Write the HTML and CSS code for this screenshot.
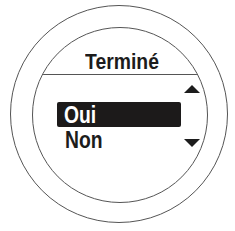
FILE: index.html
```html
<!DOCTYPE html>
<html lang="fr">
  <head>
    <meta charset="UTF-8" />
    <title>Terminé</title>
    <link rel="stylesheet" href="styles.css">
  </head>
  <body>
    <div class="bezel">
      <div class="screen">
        <div class="header">
          <span class="title">Terminé</span>
        </div>
        <div class="content">
          <div class="menu">
            <div class="item selected"><span class="label">Oui</span></div>
            <div class="item"><span class="label">Non</span></div>
          </div>
          <div class="arrows">
            <svg class="arrow" width="16" height="8" viewBox="0 0 16 8">
              <polygon points="8,0 16,8 0,8" />
            </svg>
            <svg class="arrow" width="16" height="8" viewBox="0 0 16 8">
              <polygon points="0,0 16,0 8,8" />
            </svg>
          </div>
        </div>
      </div>
    </div>
  </body>
</html>
```

FILE: styles.css
```css
body {
  margin: 0;
  background: #fff;
  font-family: "Liberation Sans", Arial, sans-serif;
  color: #1c1c1c;
}
.bezel {
  box-sizing: border-box;
  width: 218px;
  height: 218px;
  margin: 5px 0 0 10px;
  border: 1.5px solid #555;
  border-radius: 50%;
  padding: 21px 18px 18px 21px;
  display: flex;
}
.screen {
  box-sizing: border-box;
  width: 176px;
  height: 176px;
  border: 1.5px solid #555;
  border-radius: 50%;
  overflow: hidden;
  display: flex;
  flex-direction: column;
}
.header {
  box-sizing: border-box;
  height: 46.5px;
  flex: none;
  border-bottom: 1.5px solid #555;
  display: flex;
  align-items: flex-end;
  justify-content: center;
  padding: 0 0 1.4px 3px;
}
.title {
  display: inline-block;
  font-size: 22px;
  font-weight: bold;
  line-height: 20px;
  transform: scaleX(0.88);
}
.content {
  display: grid;
  grid-template-columns: 124px 16px;
  column-gap: 3px;
  padding-left: 24px;
}
.menu {
  padding-top: 27.5px;
  display: flex;
  flex-direction: column;
}
.item {
  box-sizing: border-box;
  height: 25px;
  line-height: 23px;
  padding: 1.5px 0 0 7px;
  font-size: 23px;
  font-weight: bold;
}
.item + .item {
  padding-left: 8px;
}
.item.selected {
  background: #1c1a1a;
  color: #fff;
  border-radius: 2px;
}
.label {
  display: inline-block;
  transform: scaleX(0.84);
  transform-origin: left center;
}
.arrows {
  padding-top: 10.5px;
  display: flex;
  flex-direction: column;
  gap: 46px;
}
.arrow {
  display: block;
  fill: #1c1c1c;
}
```
